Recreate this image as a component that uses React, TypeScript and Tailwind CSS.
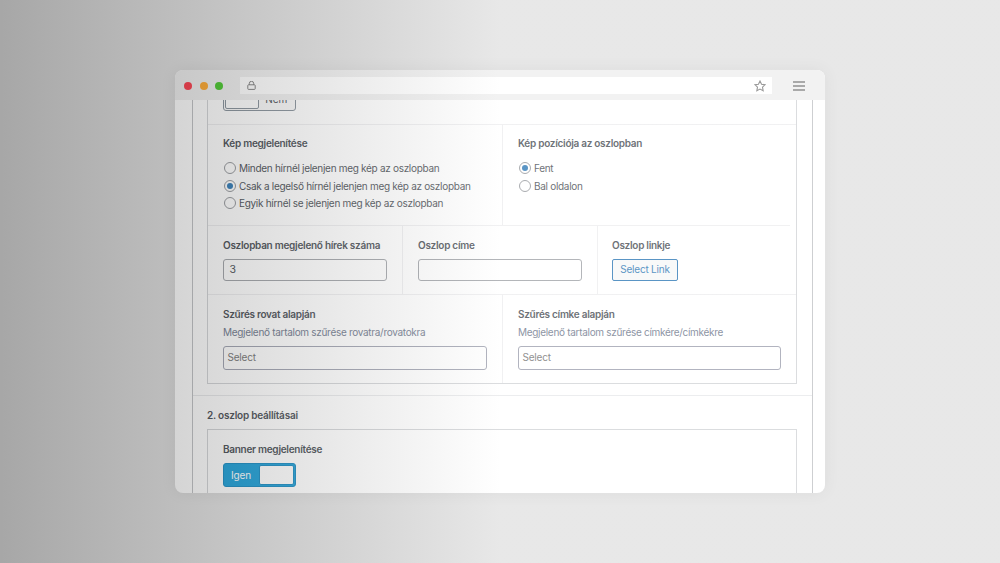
import type { ReactNode } from "react";
import { clsx } from "clsx";

function Field({
  label,
  description,
  className,
  children,
}: {
  label: string;
  description?: string;
  className?: string;
  children?: ReactNode;
}) {
  return (
    <div className={clsx("px-[15px]", className)}>
      <p className="whitespace-nowrap text-[10px] font-semibold leading-[14px] tracking-[-0.28px]">
        {label}
      </p>
      {description && (
        <p className="mt-1 whitespace-nowrap text-[10px] leading-[14px] tracking-[-0.3px] text-[#667085]">
          {description}
        </p>
      )}
      {children}
    </div>
  );
}

function RadioGroup({ options, selected }: { options: string[]; selected: number }) {
  return (
    <div className="mt-[9.7px]">
      {options.map((option, i) => (
        <div key={option} className="flex h-[17.4px] items-center gap-[3px] pl-px">
          <span className="flex size-3 shrink-0 items-center justify-center rounded-full border border-[#8c8f94] bg-white">
            {i === selected && <span className="size-1.5 rounded-full bg-[#2271b1]" />}
          </span>
          <span className="whitespace-nowrap text-[10px] leading-[14px] tracking-[-0.3px]">
            {option}
          </span>
        </div>
      ))}
    </div>
  );
}

function TextInput({ value }: { value?: string }) {
  return (
    <div className="mt-[7px] flex h-[22.5px] items-center rounded-[3px] border border-[#9a9da2] bg-white px-[5.5px] text-[10.5px]">
      {value}
    </div>
  );
}

function SelectBox() {
  return (
    <div className="mt-[7px] flex h-[24.5px] items-center rounded-[3px] border border-[#989baa] bg-white px-[3.5px] text-[10px] tracking-[-0.2px] text-[#6b6b6b]">
      Select
    </div>
  );
}

function Toolbar() {
  return (
    <div className="flex h-[30px] shrink-0 items-center bg-[#eeeeee] pl-[9.2px] pr-5 pt-[1.5px]">
      <div className="flex gap-[7.5px]">
        <span className="size-2 rounded-full bg-[#fb3040]" />
        <span className="size-2 rounded-full bg-[#ffa220]" />
        <span className="size-2 rounded-full bg-[#3bc31d]" />
      </div>
      <div className="ml-[17px] flex h-[17px] w-[531.5px] items-center justify-between bg-white pl-[6.5px] pr-[6px]">
        <svg className="size-[9px]" viewBox="0 0 9 9" fill="none" stroke="#666" strokeWidth="0.9">
          <rect x="0.8" y="3.8" width="7.4" height="4.6" rx="0.7" />
          <path d="M2.3 3.8V2.5a2.2 2.2 0 0 1 4.4 0v1.3" />
        </svg>
        <svg className="size-3" viewBox="0 0 24 24" fill="none" stroke="#777" strokeWidth="2.2">
          <path d="M12 2l3.1 6.500 7 1-5.1 4.900 1.3 7.100L12 18.100l-6.300 3.400L7 14.400 1.900 9.500l7-1z" />
        </svg>
      </div>
      <div className="ml-auto flex w-3 flex-col gap-[2.5px]">
        <span className="h-[1.5px] bg-[#8c8c8c]" />
        <span className="h-[1.5px] bg-[#8c8c8c]" />
        <span className="h-[1.5px] bg-[#8c8c8c]" />
      </div>
    </div>
  );
}

export default function App() {
  return (
    <div className="relative flex h-[563px] w-[1000px] justify-center overflow-hidden bg-[#e0e0e0] pt-[70px] font-['Inter',sans-serif] text-[#3c434a]">
      <div className="flex h-[422.5px] w-[650px] flex-col overflow-hidden rounded-[8px] bg-white shadow-[0_0_16px_rgba(0,0,0,0.07)]">
        <Toolbar />

        <div className="ml-[16.5px] flex w-[621px] flex-1 flex-col overflow-hidden border-x border-[#bdbfc2]">
          <div className="flex h-[296px] shrink-0 flex-col border-b border-[#e6e7e9] px-[14.5px]">
            <div className="flex h-[284px] flex-col border border-t-0 border-[#cfd1d4]">
              <div className="h-[25px] shrink-0 overflow-hidden border-b border-[#ececee] px-[15px]">
                <div className="-mt-[13px] flex h-6 w-[72.5px] items-center rounded-[3px] border border-[#7e8993] bg-[#f9f9f9] p-px">
                  <span className="h-5 w-[34px] rounded-[2px] border border-[#7e8993] bg-white" />
                  <span className="flex-1 text-center text-[10px]">Nem</span>
                </div>
              </div>

              <div className="mr-[6px] flex h-[101px] shrink-0 border-b border-[#ececee]">
                <Field label="Kép megjelenítése" className="w-[295px] border-r border-[#ececee] pt-[11px]">
                  <RadioGroup
                    selected={1}
                    options={[
                      "Minden hírnél jelenjen meg kép az oszlopban",
                      "Csak a legelső hírnél jelenjen meg kép az oszlopban",
                      "Egyik hírnél se jelenjen meg kép az oszlopban",
                    ]}
                  />
                </Field>
                <Field label="Kép pozíciója az oszlopban" className="flex-1 pt-[11px]">
                  <RadioGroup selected={0} options={["Fent", "Bal oldalon"]} />
                </Field>
              </div>

              <div className="flex h-[69px] shrink-0 border-b border-[#ececee]">
                <Field
                  label="Oszlopban megjelenő hírek száma"
                  className="w-[195px] border-r border-[#ececee] pt-[11.5px]"
                >
                  <TextInput value="3" />
                </Field>
                <Field label="Oszlop címe" className="w-[194.5px] border-r border-[#ececee] pt-[11.5px]">
                  <TextInput />
                </Field>
                <Field label="Oszlop linkje" className="-ml-[0.5px] flex-1 pt-[11.5px]">
                  <button className="mt-[7px] flex h-[22.5px] w-[66px] items-center justify-center whitespace-nowrap rounded-[2px] border border-[#2271b1] bg-[#f6f7f7] text-[10px] tracking-[-0.2px] text-[#2271b1]">
                    Select Link
                  </button>
                </Field>
              </div>

              <div className="flex flex-1">
                <Field
                  label="Szűrés rovat alapján"
                  description="Megjelenő tartalom szűrése rovatra/rovatokra"
                  className="w-[295px] border-r border-[#ececee] pt-[11.5px]"
                >
                  <SelectBox />
                </Field>
                <Field
                  label="Szűrés címke alapján"
                  description="Megjelenő tartalom szűrése címkére/címkékre"
                  className="flex-1 pt-[11.5px]"
                >
                  <SelectBox />
                </Field>
              </div>
            </div>
          </div>

          <div className="px-[14.5px] pt-3">
            <p className="text-[10px] font-semibold leading-[14px] tracking-[-0.22px]">
              2. oszlop beállításai
            </p>
            <div className="mt-[7px] h-24 border border-[#cfd1d4]">
              <Field label="Banner megjelenítése" className="pt-3">
                <div className="mt-[7px] flex h-6 w-[72.5px] items-center rounded-[3px] border border-[#0783be] bg-[#0d99d5] p-px">
                  <span className="flex-1 pr-[2px] text-center text-[10px] tracking-[-0.15px] text-white">
                    Igen
                  </span>
                  <span className="h-5 w-[34.5px] rounded-[2px] border border-[#0783be] bg-white" />
                </div>
              </Field>
            </div>
          </div>
        </div>
      </div>

      {/* light falloff from the left edge */}
      <div className="pointer-events-none absolute inset-0 bg-[linear-gradient(to_right,#000,#fff_50%)] opacity-[0.255]" />
    </div>
  );
}
